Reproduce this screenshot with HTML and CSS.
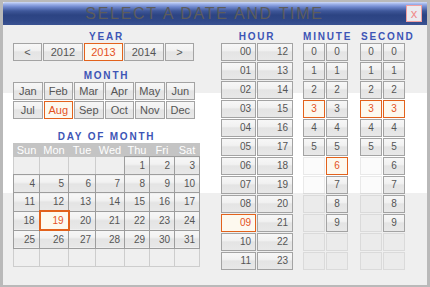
FILE: index.html
```html
<!DOCTYPE html>
<html lang="en">
<head>
    <meta charset="UTF-8">
    <title>Select a date and time</title>
    <link rel="stylesheet" href="styles.css">
</head>
<body>
    <div class="picker">
        <div class="titlebar">
            <h5 class="title">SELECT A DATE AND TIME</h5>
            <button class="close" title="close">x</button>
        </div>

        <div class="content">
            <!-- date side -->
            <div class="date">
                <h6 class="label">YEAR</h6>
                <div class="years">
                    <button class="btn arrow">&lt;</button>
                    <button class="btn year">2012</button>
                    <button class="btn year mid sel">2013</button>
                    <button class="btn year">2014</button>
                    <button class="btn arrow">&gt;</button>
                </div>

                <h6 class="label month-label">MONTH</h6>
                <div class="months">
                    <button class="btn">Jan</button>
                    <button class="btn">Feb</button>
                    <button class="btn">Mar</button>
                    <button class="btn">Apr</button>
                    <button class="btn">May</button>
                    <button class="btn">Jun</button>
                    <button class="btn">Jul</button>
                    <button class="btn sel">Aug</button>
                    <button class="btn">Sep</button>
                    <button class="btn">Oct</button>
                    <button class="btn">Nov</button>
                    <button class="btn">Dec</button>
                </div>

                <h6 class="label day-label">DAY OF MONTH</h6>
                <table class="days">
                    <colgroup>
                        <col class="c26"><col class="c29"><col class="c27"><col class="c29">
                        <col class="c25"><col class="c25"><col class="c25">
                    </colgroup>
                    <thead>
                        <tr><th>Sun</th><th>Mon</th><th>Tue</th><th>Wed</th><th>Thu</th><th>Fri</th><th>Sat</th></tr>
                    </thead>
                    <tbody>
                        <tr><td class="none"></td><td class="none"></td><td class="none"></td><td class="none"></td><td>1</td><td>2</td><td>3</td></tr>
                        <tr><td>4</td><td>5</td><td>6</td><td>7</td><td>8</td><td>9</td><td>10</td></tr>
                        <tr><td>11</td><td>12</td><td>13</td><td>14</td><td>15</td><td>16</td><td>17</td></tr>
                        <tr><td>18</td><td class="sel">19</td><td>20</td><td>21</td><td>22</td><td>23</td><td>24</td></tr>
                        <tr><td>25</td><td>26</td><td>27</td><td>28</td><td>29</td><td>30</td><td>31</td></tr>
                        <tr><td class="none"></td><td class="none"></td><td class="none"></td><td class="none"></td><td class="none"></td><td class="none"></td><td class="none"></td></tr>
                    </tbody>
                </table>
            </div>

            <!-- time side -->
            <div class="hours">
                <h6 class="label">HOUR</h6>
                <div class="hour-grid">
                    <button class="btn">00</button>
                    <button class="btn">01</button>
                    <button class="btn">02</button>
                    <button class="btn">03</button>
                    <button class="btn">04</button>
                    <button class="btn">05</button>
                    <button class="btn">06</button>
                    <button class="btn">07</button>
                    <button class="btn">08</button>
                    <button class="btn sel">09</button>
                    <button class="btn">10</button>
                    <button class="btn">11</button>
                    <button class="btn">12</button>
                    <button class="btn">13</button>
                    <button class="btn">14</button>
                    <button class="btn">15</button>
                    <button class="btn">16</button>
                    <button class="btn">17</button>
                    <button class="btn">18</button>
                    <button class="btn">19</button>
                    <button class="btn">20</button>
                    <button class="btn">21</button>
                    <button class="btn">22</button>
                    <button class="btn">23</button>
                </div>
            </div>

            <div class="minutes">
                <h6 class="label">MINUTE</h6>
                <div class="digit-grid">
                    <button class="btn">0</button>
                    <button class="btn">1</button>
                    <button class="btn">2</button>
                    <button class="btn sel">3</button>
                    <button class="btn">4</button>
                    <button class="btn">5</button>
                    <span class="btn empty"></span>
                    <span class="btn empty"></span>
                    <span class="btn empty"></span>
                    <span class="btn empty"></span>
                    <span class="btn empty"></span>
                    <span class="btn empty"></span>
                    <button class="btn">0</button>
                    <button class="btn">1</button>
                    <button class="btn">2</button>
                    <button class="btn">3</button>
                    <button class="btn">4</button>
                    <button class="btn">5</button>
                    <button class="btn sel">6</button>
                    <button class="btn">7</button>
                    <button class="btn">8</button>
                    <button class="btn">9</button>
                    <span class="btn empty"></span>
                    <span class="btn empty"></span>
                </div>
            </div>

            <div class="seconds">
                <h6 class="label">SECOND</h6>
                <div class="digit-grid">
                    <button class="btn">0</button>
                    <button class="btn">1</button>
                    <button class="btn">2</button>
                    <button class="btn sel">3</button>
                    <button class="btn">4</button>
                    <button class="btn">5</button>
                    <span class="btn empty"></span>
                    <span class="btn empty"></span>
                    <span class="btn empty"></span>
                    <span class="btn empty"></span>
                    <span class="btn empty"></span>
                    <span class="btn empty"></span>
                    <button class="btn">0</button>
                    <button class="btn">1</button>
                    <button class="btn">2</button>
                    <button class="btn sel">3</button>
                    <button class="btn">4</button>
                    <button class="btn">5</button>
                    <button class="btn">6</button>
                    <button class="btn">7</button>
                    <button class="btn">8</button>
                    <button class="btn">9</button>
                    <span class="btn empty"></span>
                    <span class="btn empty"></span>
                </div>
            </div>
        </div>
    </div>
</body>
</html>
```

FILE: styles.css
```css
body { margin: 0; font-family: "Liberation Sans", Arial, sans-serif; }

.picker {
    width: 430px; height: 287px; box-sizing: border-box;
    border: 3px solid #b9b9b9; border-top-width: 2px; border-bottom-width: 2px;
    background: linear-gradient(#efefef 0 91px, #fff 91px 191px, #efefef 191px);
}

.titlebar {
    height: 23px; display: flex; align-items: center;
    border-top-left-radius: 2px;
    background: linear-gradient(#d0dcf8 0px, #9fb3ea 2px, #6d86cc 5px, #3e5799 9px, #2c4483 13px, #2f4787 18px, #3a5292 23px);
}
.title {
    flex: 1; margin: 0; text-align: center;
    font-size: 16px; font-weight: normal; letter-spacing: 1.7px; color: #5c5c5c;
}
.close {
    width: 16px; height: 17px; margin-right: 5px; padding: 0;
    border: 1px solid #f2a0a0; background: #ebebef; color: #f08c8c;
    font: 13px "Liberation Sans", Arial, sans-serif; line-height: 13px;
}

.content { display: flex; padding: 6px 0 0 10px; }

.label {
    margin: 0; height: 12px; line-height: 12px; text-align: center;
    font-size: 10px; font-weight: bold; letter-spacing: 1.8px; color: #3d55b6;
}
.month-label { margin-top: 9px; }
.day-label { margin-top: 12px; }

.btn {
    display: block; box-sizing: border-box; height: 18px; padding: 0;
    border: 1px solid #a3a3a3; color: #555;
    background: linear-gradient(#f7f7f7, #f1f1f1 40%, #e4e4e4 50%, #e8e8e8);
    font: 11px "Liberation Sans", Arial, sans-serif; line-height: 16px; text-align: center;
}
.btn.sel { border-color: #e2621c; background: #fdf9ef; color: #e4521e; }
.btn.empty { border-color: rgba(0, 0, 0, 0.07); background: rgba(0, 0, 0, 0.015); }

.date { width: 187px; }
.years { display: flex; gap: 1px; }
.arrow { width: 29px; }
.year { width: 40px; }
.year.mid { width: 39px; }

.months { display: grid; grid-template-columns: repeat(6, 1fr); gap: 1px; width: 182px; }

.days { border-collapse: collapse; table-layout: fixed; width: 187px; font-size: 10px; color: #555; }
.c26 { width: 26px; } .c27 { width: 27px; } .c29 { width: 29px; } .c25 { width: 25px; }
.days th {
    height: 12px; padding: 0; border: 1px solid #c4c4c4; background: #c4c4c4;
    color: #fff; font-weight: normal; font-size: 11px; text-align: center; line-height: 12px;
}
/* double at 1px draws solid, but wins over the pale borders of blank cells */
.days td {
    height: 17px; padding: 0 4px 0 0; text-align: right;
    border: 1px double #9d9d9d;
    background: linear-gradient(#f7f7f7, #f1f1f1 40%, #e4e4e4 50%, #e8e8e8);
}
.days td.none { border: 1px solid #cdcdcd; background: #efefef; }
.days td.sel { border: 2px double #e2621c; background: #fdf9ef; color: #e4521e; }

.hours { width: 72px; margin-left: 21px; }
.hour-grid {
    display: grid; grid-template-columns: 35px 36px; grid-template-rows: repeat(12, 18px);
    grid-auto-flow: column; gap: 1px;
}
.hour-grid .btn { text-align: right; padding-right: 4px; font-size: 10px; }

.minutes, .seconds { width: 47px; margin-left: 10px; }
.minutes .label, .seconds .label { text-align: left; }
.seconds .label { padding-left: 1px; }
.digit-grid {
    display: grid; grid-template-columns: 22px 22px; grid-template-rows: repeat(12, 18px);
    grid-auto-flow: column; gap: 1px;
}
.digit-grid .btn { font-size: 10px; }
```
